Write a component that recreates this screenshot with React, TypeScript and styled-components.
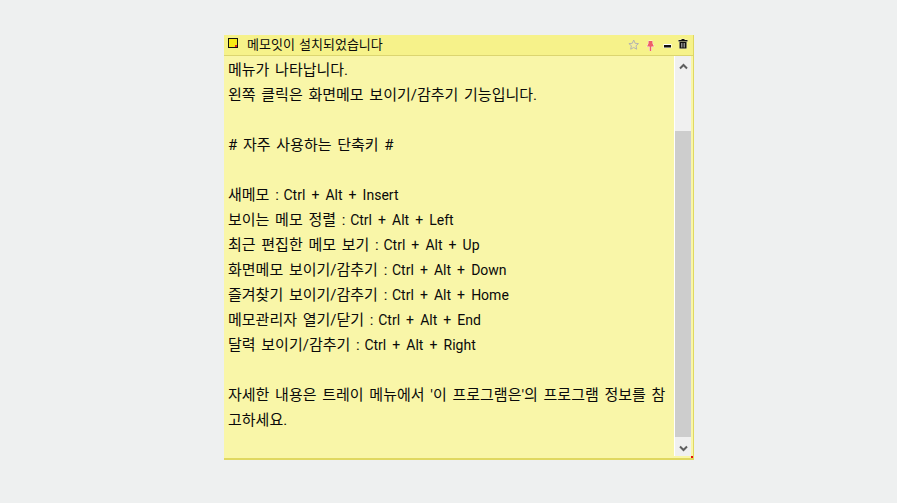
import React from "react";
import styled, { createGlobalStyle } from "styled-components";

const GlobalStyle = createGlobalStyle`
  html, body { margin: 0; padding: 0; height: 100%; background: #eef0f0; }
  #root { height: 100%; }
`;

const Page = styled.div`
  width: 897px;
  height: 503px;
  overflow: hidden;
  padding: 35px 0 0 224px;
  box-sizing: border-box;
  display: flex;
  font-family: "Roboto", "Noto Sans CJK KR", sans-serif;
  color: #0a0a0a;
`;

const Note = styled.div`
  position: relative;
  width: 470px;
  height: 425px;
  box-sizing: border-box;
  border-right: 1px solid #e0d860;
  border-bottom: 2px solid #e0d860;
  background: #f9f6a8;
  display: flex;
  flex-direction: column;
`;

const TitleBar = styled.div`
  height: 21px;
  flex: none;
  box-sizing: border-box;
  border-bottom: 1px solid #dcd570;
  background: #f6f28a;
  display: flex;
  align-items: center;
  padding: 0 5px 0 4px;
`;

const Swatch = styled.span`
  position: relative;
  width: 10px;
  height: 10px;
  box-sizing: border-box;
  border: 1px solid #111;
  background: #f7e814;
  margin-right: 9px;
  margin-top: -4px;
  &::after {
    content: "";
    position: absolute;
    right: 0;
    bottom: 0;
    width: 2px;
    height: 2px;
    background: #e02020;
  }
`;

const Title = styled.span`
  flex: 1;
  font-size: 13px;
  line-height: 18px;
  word-spacing: 1px;
`;

const Tools = styled.div`
  display: flex;
  align-items: center;
  gap: 5px;
  height: 14px;
  margin-top: -2px;
`;

const Body = styled.div`
  flex: 1;
  min-height: 0;
  display: flex;
  padding: 0 2px 2px 0;
`;

const Content = styled.div`
  flex: 1;
  padding: 2px 4px 0;
  font-size: 15px;
  line-height: 25px;
  word-spacing: 2px;
  word-break: break-all;
  white-space: pre-wrap;
  overflow: hidden;
`;

const Keys = styled.span`
  font-size: 14px;
  word-spacing: 2.6px;
  margin-left: -1px;
`;

const Scrollbar = styled.div`
  width: 17px;
  flex: none;
  box-sizing: border-box;
  border-left: 1px solid #fff;
  background: #f0f0f0;
  display: flex;
  flex-direction: column;
`;

const ArrowCell = styled.div<{ $down?: boolean }>`
  height: 19px;
  flex: none;
  box-sizing: border-box;
  padding-top: ${(p) => (p.$down ? "3px" : "1px")};
  display: flex;
  align-items: center;
  justify-content: center;
`;

const Track = styled.div`
  flex: 1;
  display: flex;
  flex-direction: column;
  padding-top: 56px;
`;

const Thumb = styled.div`
  flex: 1;
  background: #cdcdcd;
`;

const Corner = styled.span`
  position: absolute;
  right: 0;
  bottom: 0;
  width: 2px;
  height: 2px;
  background: #e81010;
`;

const Chevron = ({ up }: { up?: boolean }) => (
  <svg width="9" height="7" viewBox="0 0 9 7">
    <path d={up ? "M1 5.5 L4.5 2 L8 5.5" : "M1 1.5 L4.5 5 L8 1.5"} fill="none" stroke="#5f5f5f" strokeWidth="2" />
  </svg>
);

const keyRows = [
  ["새메모", "Ctrl + Alt + Insert"],
  ["보이는 메모 정렬", "Ctrl + Alt + Left"],
  ["최근 편집한 메모 보기", "Ctrl + Alt + Up"],
  ["화면메모 보이기/감추기", "Ctrl + Alt + Down"],
  ["즐겨찾기 보이기/감추기", "Ctrl + Alt + Home"],
  ["메모관리자 열기/닫기", "Ctrl + Alt + End"],
  ["달력 보이기/감추기", "Ctrl + Alt + Right"],
];

export default function App() {
  return (
    <>
      <GlobalStyle />
      <Page>
        <Note>
          <TitleBar>
            <Swatch />
            <Title>메모잇이 설치되었습니다</Title>
            <Tools>
              <svg width="11" height="14" viewBox="0 0 11 14">
                <path d="M5.7 3 L7.1 6.3 L10.5 6.6 L8 8.8 L8.7 12.2 L5.7 10.5 L2.7 12.2 L3.4 8.8 L0.9 6.6 L4.3 6.3 Z" fill="#f3ee9c" stroke="#b4b4b0" strokeWidth="1" />
              </svg>
              <svg width="13" height="14" viewBox="0 0 13 14">
                <path d="M4.5 4 H8.5 V6.5 L10 9.5 H7.3 V14 H5.7 V9.5 H3 L4.5 6.5 Z" fill="#ee5f68" stroke="#fff" strokeWidth="0.8" paintOrder="stroke" />
              </svg>
              <svg width="11" height="14" viewBox="0 0 11 14">
                <rect x="1.5" y="7" width="8" height="4" fill="#fff" />
                <rect x="2" y="8" width="7" height="2.5" fill="#111" />
              </svg>
              <svg width="10" height="14" viewBox="0 0 10 14">
                <path d="M3.5 2 H6.5 V3 H9.5 V4.5 H0.5 V3 H3.5 Z M1.5 5 H8.5 V11.5 H1.5 Z" fill="#111" stroke="#fff" strokeWidth="0.4" paintOrder="stroke" />
                <path d="M3.5 6 V10.5 M5 6 V10.5 M6.5 6 V10.5" stroke="#ddd" strokeWidth="0.6" />
              </svg>
            </Tools>
          </TitleBar>
          <Body>
            <Content>
              {"메뉴가 나타납니다.\n왼쪽 클릭은 화면메모 보이기/감추기 기능입니다.\n\n# 자주 사용하는 단축키 #\n\n"}
              {keyRows.map(([label, keys]) => (
                <React.Fragment key={label}>
                  {label} : <Keys>{keys}</Keys>
                  {"\n"}
                </React.Fragment>
              ))}
              {"\n자세한 내용은 트레이 메뉴에서 '이 프로그램은'의 프로그램 정보를 참고하세요."}
            </Content>
            <Scrollbar>
              <ArrowCell><Chevron up /></ArrowCell>
              <Track><Thumb /></Track>
              <ArrowCell $down><Chevron /></ArrowCell>
            </Scrollbar>
          </Body>
          <Corner />
        </Note>
      </Page>
    </>
  );
}
